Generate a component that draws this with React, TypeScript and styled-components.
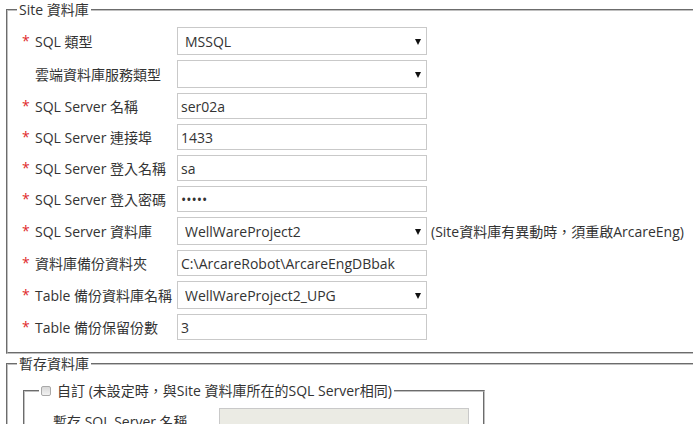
import React from "react";
import styled, { createGlobalStyle } from "styled-components";

const Global = createGlobalStyle`
  html, body { margin: 0; padding: 0; background: #fff; overflow: hidden; }
  body {
    font-family: "Open Sans", "Noto Sans CJK TC", sans-serif;
    font-size: 14px;
    color: #333;
  }
`;

const Page = styled.div`
  width: 693px;
  height: 424px;
  overflow: hidden;
  padding-left: 6px;
  box-sizing: border-box;
`;

const Group = styled.fieldset<{ $w: number; $ml?: number }>`
  margin: 0 0 0 ${(p) => p.$ml ?? 0}px;
  width: ${(p) => p.$w}px;
  box-sizing: border-box;
  border: 2px groove #c0c0c0;
  padding: 0 0 12px 0;
  min-width: 0;
`;

const Legend = styled.legend<{ $ml?: number }>`
  margin-left: ${(p) => p.$ml ?? 9}px;
  padding: 0 2px;
  line-height: 20px;
  height: 20px;
  font-size: 14px;
  color: #333;
  display: flex;
  align-items: center;
  white-space: nowrap;
`;

const Rows = styled.div<{ $pl: number }>`
  display: flex;
  flex-direction: column;
  gap: 5px;
  padding: 7px 0 0 ${(p) => p.$pl}px;
`;

const Row = styled.div`
  display: flex;
  align-items: center;
`;

const LabelCell = styled.div<{ $w: number }>`
  flex: 0 0 ${(p) => p.$w}px;
  display: flex;
  align-items: center;
  white-space: nowrap;
  color: #333;
`;

const Star = styled.span`
  flex: 0 0 13px;
  color: #e02b2b;
  position: relative;
  top: -1px;
`;

const TextInput = styled.input<{ $disabled?: boolean }>`
  box-sizing: border-box;
  width: 250px;
  height: 26px;
  margin: 0;
  padding: 0 3px;
  border: 1px solid #c9c9c9;
  border-radius: 0;
  background: ${(p) => (p.$disabled ? "#ebebe4" : "#fff")};
  font-family: inherit;
  font-size: 14px;
  color: #333;
  outline: none;
`;

const SelectWrap = styled.div`
  position: relative;
  width: 250px;
  height: 28px;
  &::after {
    content: "";
    position: absolute;
    right: 6px;
    top: 12px;
    border-left: 3.5px solid transparent;
    border-right: 3.5px solid transparent;
    border-top: 6px solid #111;
    pointer-events: none;
  }
`;

const Select = styled.select`
  appearance: none;
  -webkit-appearance: none;
  box-sizing: border-box;
  width: 250px;
  height: 28px;
  margin: 0;
  padding: 0 20px 0 7px;
  border: 1px solid #c9c9c9;
  border-radius: 0;
  background: #fff;
  font-family: inherit;
  font-size: 14px;
  color: #333;
  outline: none;
`;

const Note = styled.span`
  margin-left: 4px;
  white-space: nowrap;
  color: #333;
`;

const Check = styled.input`
  appearance: none;
  -webkit-appearance: none;
  width: 10px;
  height: 10px;
  margin: 0 6px 0 0;
  border: 1px solid #a9a9a9;
  border-radius: 2px;
  background: linear-gradient(#d8d8d8, #f2f2f2);
  box-sizing: border-box;
`;

const Second = styled.div`
  padding: 7px 0 0 15px;
`;

type Field = {
  label: string;
  required: boolean;
  kind: "select" | "input" | "password";
  value: string;
  note?: string;
};

const fields: Field[] = [
  { label: "SQL 類型", required: true, kind: "select", value: "MSSQL" },
  { label: "雲端資料庫服務類型", required: false, kind: "select", value: "" },
  { label: "SQL Server 名稱", required: true, kind: "input", value: "ser02a" },
  { label: "SQL Server 連接埠", required: true, kind: "input", value: "1433" },
  { label: "SQL Server 登入名稱", required: true, kind: "input", value: "sa" },
  { label: "SQL Server 登入密碼", required: true, kind: "password", value: "aaaaa" },
  {
    label: "SQL Server 資料庫",
    required: true,
    kind: "select",
    value: "WellWareProject2",
    note: "(Site資料庫有異動時，須重啟ArcareEng)",
  },
  { label: "資料庫備份資料夾", required: true, kind: "input", value: "C:\\ArcareRobot\\ArcareEngDBbak" },
  { label: "Table 備份資料庫名稱", required: true, kind: "select", value: "WellWareProject2_UPG" },
  { label: "Table 備份保留份數", required: true, kind: "input", value: "3" },
];

export default function App() {
  return (
    <Page>
      <Global />
      <Group $w={720}>
        <Legend>Site 資料庫</Legend>
        <Rows $pl={14}>
          {fields.map((f) => (
            <Row key={f.label}>
              <LabelCell $w={155}>
                <Star>{f.required ? "*" : ""}</Star>
                {f.label}
              </LabelCell>
              {f.kind === "select" ? (
                <SelectWrap>
                  <Select defaultValue={f.value}>
                    <option value={f.value}>{f.value}</option>
                  </Select>
                </SelectWrap>
              ) : (
                <TextInput
                  type={f.kind === "password" ? "password" : "text"}
                  defaultValue={f.value}
                  readOnly
                />
              )}
              {f.note && <Note>{f.note}</Note>}
            </Row>
          ))}
        </Rows>
      </Group>
      <Group $w={720}>
        <Legend>暫存資料庫</Legend>
        <Second>
          <Group $w={462}>
            <Legend $ml={14}>
              <Check type="checkbox" />
              自訂 (未設定時，與Site 資料庫所在的SQL Server相同)
            </Legend>
            <Rows $pl={28}>
              <Row>
                <LabelCell $w={166}>暫存 SQL Server 名稱</LabelCell>
                <TextInput $disabled disabled defaultValue="" />
              </Row>
            </Rows>
          </Group>
        </Second>
      </Group>
    </Page>
  );
}
